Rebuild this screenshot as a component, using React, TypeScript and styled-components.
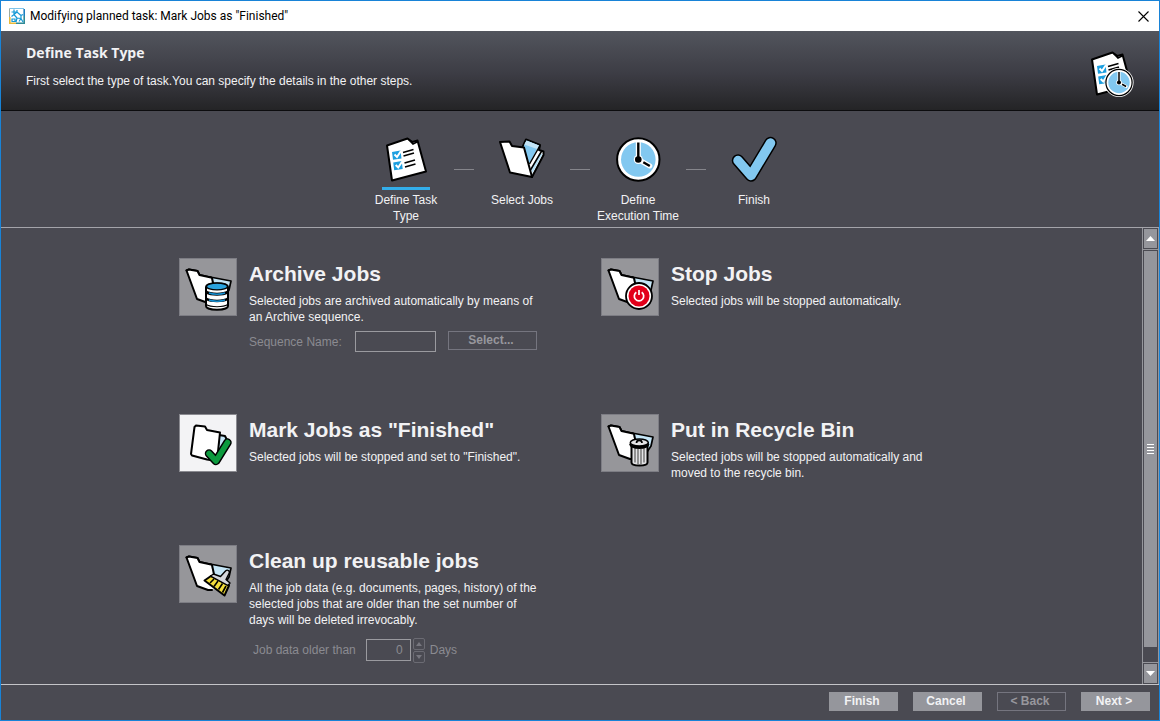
import React from "react";
import styled, { createGlobalStyle, css } from "styled-components";

const color = {
  frame: "#1883d7",
  panel: "#4a4a52",
  line: "#a4a4aa",
  fill: "#95969c",
  text: "#f2f2f4",
  muted: "#8b8b91",
  accent: "#33aeea",
  sky: "#82c8f0",
};

const GlobalStyle = createGlobalStyle`
  * { box-sizing: border-box; }
  body {
    margin: 0;
    background: ${color.panel};
    color: ${color.text};
    font: 12px/16px "Liberation Sans", Arial, sans-serif;
  }
  button, input { font: inherit; color: inherit; }
  h1, h2, p, ol, ul { margin: 0; padding: 0; }
  svg { display: block; }
`;

const Window = styled.div`
  display: flex;
  flex-direction: column;
  min-height: 100vh;
  border: 1px solid ${color.frame};
`;

const TitleBar = styled.header`
  display: flex;
  align-items: center;
  gap: 5px;
  height: 30px;
  padding: 0 9px 0 8px;
  background: #fff;
  color: #000;
  font-family: Roboto, "Noto Sans", sans-serif;
`;

const WindowTitle = styled.span`
  flex: 1;
`;

const CloseButton = styled.button`
  display: grid;
  place-items: center;
  width: 13px;
  height: 13px;
  padding: 0;
  border: 0;
  background: none;
`;

const Banner = styled.section`
  display: flex;
  align-items: center;
  justify-content: space-between;
  height: 80px;
  padding: 0 23px 0 25px;
  border-bottom: 1px solid #0c0c0e;
  background: linear-gradient(#52555d, #3c3c44 55%, #242426);
`;

const BannerText = styled.div`
  display: flex;
  flex-direction: column;
  gap: 12px;
  padding-bottom: 8px;
`;

const BannerTitle = styled.h1`
  font: bold 14px/16px "Open Sans", "Noto Sans", sans-serif;
`;

const BannerArt = styled.div`
  padding-top: 8px;
`;

const Steps = styled.ol`
  display: flex;
  justify-content: center;
  height: 117px;
  padding-top: 25px;
  border-bottom: 1px solid ${color.line};
  list-style: none;
`;

const Step = styled.li`
  display: flex;
  flex-direction: column;
  align-items: center;
  width: 96px;
  padding: 0 4px;
  text-align: center;
`;

const StepIcon = styled.div<{ $active?: boolean }>`
  margin-bottom: 2px;
  padding-bottom: 3px;
  border-bottom: 3px solid ${(p) => (p.$active ? color.accent : "transparent")};
`;

const Dash = styled.li`
  width: 20px;
  height: 1px;
  margin-top: 33px;
  background: #85858b;
`;

const Body = styled.div`
  display: flex;
  flex: 1;
`;

const Options = styled.main`
  display: grid;
  flex: 1;
  grid-template-columns: repeat(2, minmax(0, 363px));
  justify-content: center;
  align-content: start;
  gap: 62px 59px;
  padding: 30px 16px 16px;
`;

const Option = styled.section`
  display: grid;
  grid-template-columns: 58px 1fr;
  align-items: start;
  gap: 12px;
`;

const OptionButton = styled.button<{ $selected?: boolean }>`
  width: 58px;
  height: 58px;
  padding: 0;
  border: 1px solid ${(p) => (p.$selected ? "#8a8a90" : "#7d7d84")};
  background: ${(p) => (p.$selected ? "#f3f3f5" : "#96969a")};
`;

const OptionTitle = styled.h2`
  margin-bottom: 3px;
  font-size: 21px;
  line-height: 32px;
`;

const Description = styled.p`
  max-width: 290px;
  padding-bottom: 2px;
`;

const FieldRow = styled.div<{ $spaced?: boolean }>`
  display: flex;
  align-items: center;
  height: ${(p) => (p.$spaced ? 26 : 21)}px;
  margin-top: ${(p) => (p.$spaced ? 7 : 4)}px;
  padding-left: ${(p) => (p.$spaced ? 4 : 0)}px;
  color: ${color.muted};
`;

const FieldLabel = styled.label`
  min-width: 96px;
  margin-right: 10px;
`;

const TextBox = styled.input<{ $number?: boolean }>`
  width: ${(p) => (p.$number ? 45 : 81)}px;
  height: ${(p) => (p.$number ? 22 : 21)}px;
  padding: 0 7px;
  border: 1px solid #9a9a9f;
  border-radius: 0;
  background: none;
  text-align: ${(p) => (p.$number ? "right" : "left")};
`;

const outlined = css`
  border: 1px solid #75757f;
  background: none;
  color: #97979d;
`;

const PushButton = styled.button<{ $disabledLook?: boolean; $wide?: boolean }>`
  width: ${(p) => (p.$wide ? 89 : 69)}px;
  height: 19px;
  padding: 0 3px 0 0;
  border: 0;
  background: ${color.fill};
  font-weight: bold;
  line-height: 17px;
  ${(p) => p.$disabledLook && outlined}
`;

const SelectButton = styled(PushButton)`
  align-self: flex-start;
  margin-left: 12px;
`;

const Spinner = styled.div`
  display: flex;
  flex-direction: column;
  gap: 1px;
  margin: 0 5px 0 2px;
`;

const SpinButton = styled.button`
  display: grid;
  place-items: center;
  width: 12px;
  height: 12px;
  padding: 0;
  border: 1px solid #6b6b73;
  border-radius: 2px;
  background: none;
`;

const ScrollBar = styled.div`
  display: flex;
  flex-direction: column;
  width: 17px;
  border: solid ${color.fill};
  border-width: 0 1px;
`;

const ScrollButton = styled.button<{ $end?: boolean }>`
  display: grid;
  place-items: center;
  height: 22px;
  padding: 0;
  border: solid ${color.fill};
  border-width: ${(p) => (p.$end ? "1px 0 0" : "0 0 1px")};
  background: ${color.fill};
  box-shadow: inset 0 0 0 1px ${color.panel};
`;

const Track = styled.div`
  display: flex;
  flex: 1;
  flex-direction: column;
  padding: 1px 1px 15px;
`;

const Thumb = styled.div`
  display: flex;
  flex: 1;
  flex-direction: column;
  align-items: center;
  justify-content: center;
  gap: 2px;
  background: ${color.fill};
`;

const Grip = styled.span`
  width: 7px;
  height: 1px;
  background: #fff;
`;

const Footer = styled.footer`
  display: flex;
  justify-content: flex-end;
  gap: 15px;
  height: 36px;
  padding: 7px 9px 0;
  border-top: 1px solid #c4c4c8;
`;

const ink = {
  stroke: "#000",
  strokeWidth: 2,
  strokeLinejoin: "round" as const,
  strokeLinecap: "round" as const,
};

const Logo = () => (
  <svg width="16" height="16" viewBox="0 0 16 16" fill="none">
    <path d="M.5 .5H15" stroke="#7fc4ea" />
    <path d="M.5 .5V15.5" stroke="#9aa9a0" />
    <path d="M.8 9V15.2H7" stroke="#e9b93a" strokeWidth="1.6" />
    <path d="M7 15.2H15.2V8" stroke="#2f8a96" strokeWidth="1.6" />
    <path d="M15.2 8V1" stroke="#1b7fc0" strokeWidth="1.6" />
    <path d="M5 1.500v5M2.500 4h5.500l4 3.500M8 2v2M12 7.500v3l2 3.500M12 7.500l2-1M2.500 8.500l2.500-2 3 3.500M8 10l4 .5M8 10l-1 4M5 6.500l3-2.500M3 11h3v2.500H3zM10 13.500l2-3" stroke="#1599d6" strokeWidth="1.200" />
  </svg>
);

const Clock = ({ x, y, r }: { x: number; y: number; r: number }) => (
  <g transform={`translate(${x} ${y}) scale(${r / 22})`}>
    <circle r="21.200" fill="#fff" stroke="#000" strokeWidth="2" />
    <circle r="17.300" fill={color.sky} />
    <path d="M0 0V-16.500M0 0L11.500 6.500" stroke="#fff" strokeWidth="5" strokeLinecap="round" />
    <circle r="4.500" fill="#fff" />
    <path d="M0 0V-17M5 2.800L11.500 6.500" stroke="#000" strokeWidth="2.400" />
    <circle r="3.300" fill="#000" />
  </g>
);

const Checklist = () => (
  <g>
    <path d="M5 9.500L25.500 2.500L30.500 6L35.500 4.500L44 35.500L10 44.500Z" fill="#fff" {...ink} />
    <path d="M26 3l5 5 5-2.500" fill="none" stroke="#000" strokeWidth="1.500" />
    <path d="M10 16l8.500-1.500 1 8-8.500 1.200zM11.200 26.500l8.500-1.500 1 8-8.500 1.200z" fill="#1c9fe0" />
    <path d="M12.500 18.500l2.500 2.500 4-6M13.700 29l2.500 2.500 4-6" fill="none" stroke="#fff" strokeWidth="2" />
    <path d="M21 16.500l10.500-3M21.500 20l10.500-3M22.500 27l10.500-3M23 31l10.500-3" stroke="#000" strokeWidth="1.700" />
  </g>
);

const TaskIcon = () => (
  <svg width="48" height="48" viewBox="0 0 48 48"><Checklist /></svg>
);

const BannerIcon = () => (
  <svg width="48" height="48" viewBox="0 0 48 48">
    <g transform="translate(-1 -1)"><Checklist /></g>
    <circle cx="31" cy="31.500" r="14.600" fill="#fff" />
    <Clock x={31} y={31.5} r={13.6} />
  </svg>
);

const FolderStepIcon = () => (
  <svg width="48" height="48" viewBox="0 0 48 48">
    <path d="M28 3.500L42 9L41 14L45.500 15.500V19L34 41L24 20L25 10Z" fill="#fff" {...ink} />
    <path d="M28.500 4.500L41 9.500L31 28L24 14Z" fill={color.sky} />
    <path d="M28.500 4.500L41 9.500L39 13L26.200 8.500Z" fill="#c3e4f6" />
    <path d="M44.500 18L34.500 37L33 32L41.500 17Z" fill="#b5dff5" />
    <path d="M42 9.500L31.500 28M44 14.500L32.500 34" stroke="#000" strokeWidth="1.500" />
    <path d="M2 6L11.500 5.500L14 10L26 11.500L34 41L12 36.500Z" fill="#fff" {...ink} />
  </svg>
);

const ClockStepIcon = () => (
  <svg width="48" height="48" viewBox="0 0 48 48"><Clock x={24.3} y={23.5} r={22} /></svg>
);

const TickStepIcon = () => (
  <svg width="48" height="48" viewBox="0 0 48 48" fill="none" strokeLinecap="round" strokeLinejoin="round">
    <path d="M8 24.500L21 39.500L40.500 7" stroke="#000" strokeWidth="12.500" />
    <path d="M8 24.500L21 39.500L40.500 7" stroke={color.sky} strokeWidth="9.500" />
  </svg>
);

const OptionSvg = ({ children }: { children: React.ReactNode }) => (
  <svg width="56" height="56" viewBox="1 1 56 56">{children}</svg>
);

const OpenFolder = () => (
  <g>
    <path d="M31 19L52 23L50 32L42 44L33 42Z" fill="#c5e6f7" {...ink} strokeWidth={1.7} />
    <path d="M7.500 12.500L10 11.500L18.500 13L20.500 17L32 19.500" fill="none" {...ink} />
    <path d="M7.500 12.500L10 11.500L18.500 13L20.500 17L32 19.500L37 44L29 45L18 41Z" fill="#fff" />
    <path d="M33 20L36 34M7.500 12.500L10 11.500L18.500 13L20.500 17L32 19.500M7.500 12.500L18 41L29 45H33" fill="none" {...ink} />
  </g>
);

const ArchiveIcon = () => (
  <OptionSvg>
    <OpenFolder />
    <path d="M27 29v19c0 5 22 5 22 0V29c0-5-22-5-22 0z" fill="#fff" {...ink} />
    <path d="M27 32c4 3.500 18 3.500 22 0v3.500c-4 3-18 3-22 0zM27 39c4 3.500 18 3.500 22 0v3c-4 3-18 3-22 0zM27 45.500c4 3.500 18 3.500 22 0v1.500c-4 3-18 3-22 0z" fill="#000" />
    <path d="M30 35c4 1.500 12 1.500 16 0M30 42c4 1.500 12 1.500 16 0" fill="none" stroke="#168fd0" strokeWidth="1.500" />
    <ellipse cx="38" cy="28.500" rx="10.500" ry="3.400" fill="#29a3df" stroke="#000" strokeWidth="1.400" />
  </OptionSvg>
);

const StopIcon = () => (
  <OptionSvg>
    <OpenFolder />
    <circle cx="38" cy="38" r="13" fill="#fff" stroke="#000" strokeWidth="1.800" />
    <circle cx="38" cy="38" r="10.500" fill="#e2001a" />
    <path d="M35.300 34.300a4.700 4.700 0 1 0 5.400 0M38 32v5" fill="none" stroke="#fff" strokeWidth="1.700" />
  </OptionSvg>
);

const FinishedIcon = () => (
  <OptionSvg>
    <path d="M40 21L46 22L48 26L41 45L38 44Z" fill="#c5e6f7" {...ink} />
    <path d="M17 11.500L26 12.500L28 16L41 18.500L38 47L28 45.500L13 41.500L12 40L15.500 13Z" fill="#fff" {...ink} />
    <path d="M30 39.500L37 47L48.500 28.500" fill="none" stroke="#000" strokeWidth="8.500" strokeLinecap="round" strokeLinejoin="round" />
    <path d="M30 39.500L37 47L48.500 28.500" fill="none" stroke="#0c9a3e" strokeWidth="5.500" strokeLinecap="round" strokeLinejoin="round" />
  </OptionSvg>
);

const RecycleIcon = () => (
  <OptionSvg>
    <OpenFolder />
    <path d="M30.500 31V48.500c0 4 16 4 16 0V31z" fill="#e4e4e6" {...ink} />
    <path d="M34 34v14.500M37 35v15M40 35v15M43 34v14.500" stroke="#666" strokeWidth="1.300" />
    <ellipse cx="38.300" cy="30.500" rx="10" ry="4.500" fill="#000" />
    <ellipse cx="38.300" cy="28.500" rx="9" ry="3.600" fill="#e4e4e6" stroke="#000" strokeWidth="1.500" />
    <path d="M35.500 29c0-3.500 5.500-3.500 5.500 0" fill="none" stroke="#000" strokeWidth="1.700" />
  </OptionSvg>
);

const CleanIcon = () => (
  <OptionSvg>
    <OpenFolder />
    <path d="M25.500 35.500L32 31L50 40.500L45.500 50.500Z" fill="#f2dd3c" {...ink} />
    <path d="M31 38l4-4M35 41.500l4-5.500M39.500 44.500l4-6M43.500 47.500l3.500-6.500" stroke="#000" strokeWidth="1.600" />
    <path d="M31.500 31l3-2 7 2.500 5-5.500c2-2 5 0 3.500 2.500L47 34.500l4 3.500-2 2.500z" fill="#d5d7dc" stroke="#000" strokeWidth="1.400" strokeLinejoin="round" />
  </OptionSvg>
);

const Arrow = ({ down, small }: { down?: boolean; small?: boolean }) => (
  <svg width={small ? 6 : 9} height={small ? 4 : 5} viewBox="0 0 9 5" preserveAspectRatio="none">
    <path d={down ? "M0 0H9L4.500 5Z" : "M0 5H9L4.500 0Z"} fill={small ? "#77777f" : "#fff"} />
  </svg>
);

const steps = [
  { label: "Define Task Type", Icon: TaskIcon },
  { label: "Select Jobs", Icon: FolderStepIcon },
  { label: "Define Execution Time", Icon: ClockStepIcon },
  { label: "Finish", Icon: TickStepIcon },
];

interface TaskOptionProps {
  title: string;
  text: string;
  icon: React.ReactNode;
  selected?: boolean;
  children?: React.ReactNode;
}

const TaskOption = ({ title, text, icon, selected, children }: TaskOptionProps) => (
  <Option>
    <OptionButton type="button" aria-label={title} aria-pressed={!!selected} $selected={selected}>
      {icon}
    </OptionButton>
    <div>
      <OptionTitle>{title}</OptionTitle>
      <Description>{text}</Description>
      {children}
    </div>
  </Option>
);

export default function App() {
  return (
    <Window>
      <GlobalStyle />
      <TitleBar>
        <Logo />
        <WindowTitle>Modifying planned task: Mark Jobs as "Finished"</WindowTitle>
        <CloseButton type="button" aria-label="Close">
          <svg width="11" height="11" viewBox="0 0 11 11">
            <path d="M.5 .5l10 10M10.500 .5l-10 10" stroke="#000" strokeWidth="1.100" />
          </svg>
        </CloseButton>
      </TitleBar>
      <Banner>
        <BannerText>
          <BannerTitle>Define Task Type</BannerTitle>
          <p>First select the type of task.You can specify the details in the other steps.</p>
        </BannerText>
        <BannerArt><BannerIcon /></BannerArt>
      </Banner>
      <Steps>
        {steps.map(({ label, Icon }, i) => (
          <React.Fragment key={label}>
            {i > 0 && <Dash aria-hidden="true" />}
            <Step aria-current={i === 0 ? "step" : undefined}>
              <StepIcon $active={i === 0}><Icon /></StepIcon>
              {label}
            </Step>
          </React.Fragment>
        ))}
      </Steps>
      <Body>
        <Options>
          <TaskOption
            title="Archive Jobs"
            text="Selected jobs are archived automatically by means of an Archive sequence."
            icon={<ArchiveIcon />}
          >
            <FieldRow>
              <FieldLabel htmlFor="sequence">Sequence Name:</FieldLabel>
              <TextBox id="sequence" type="text" disabled />
              <SelectButton type="button" $disabledLook $wide disabled>Select...</SelectButton>
            </FieldRow>
          </TaskOption>
          <TaskOption
            title="Stop Jobs"
            text="Selected jobs will be stopped automatically."
            icon={<StopIcon />}
          />
          <TaskOption
            title={'Mark Jobs as "Finished"'}
            text={'Selected jobs will be stopped and set to "Finished".'}
            icon={<FinishedIcon />}
            selected
          />
          <TaskOption
            title="Put in Recycle Bin"
            text="Selected jobs will be stopped automatically and moved to the recycle bin."
            icon={<RecycleIcon />}
          />
          <TaskOption
            title="Clean up reusable jobs"
            text="All the job data (e.g. documents, pages, history) of the selected jobs that are older than the set number of days will be deleted irrevocably."
            icon={<CleanIcon />}
          >
            <FieldRow $spaced>
              <FieldLabel htmlFor="age">Job data older than</FieldLabel>
              <TextBox id="age" type="text" inputMode="numeric" defaultValue="0" $number disabled />
              <Spinner>
                <SpinButton type="button" aria-label="Increase" disabled><Arrow small /></SpinButton>
                <SpinButton type="button" aria-label="Decrease" disabled><Arrow small down /></SpinButton>
              </Spinner>
              Days
            </FieldRow>
          </TaskOption>
        </Options>
        <ScrollBar>
          <ScrollButton type="button" aria-label="Scroll up"><Arrow /></ScrollButton>
          <Track>
            <Thumb><Grip /><Grip /><Grip /><Grip /></Thumb>
          </Track>
          <ScrollButton type="button" aria-label="Scroll down" $end><Arrow down /></ScrollButton>
        </ScrollBar>
      </Body>
      <Footer>
        <PushButton type="button">Finish</PushButton>
        <PushButton type="button">Cancel</PushButton>
        <PushButton type="button" $disabledLook disabled>&lt; Back</PushButton>
        <PushButton type="button">Next &gt;</PushButton>
      </Footer>
    </Window>
  );
}
